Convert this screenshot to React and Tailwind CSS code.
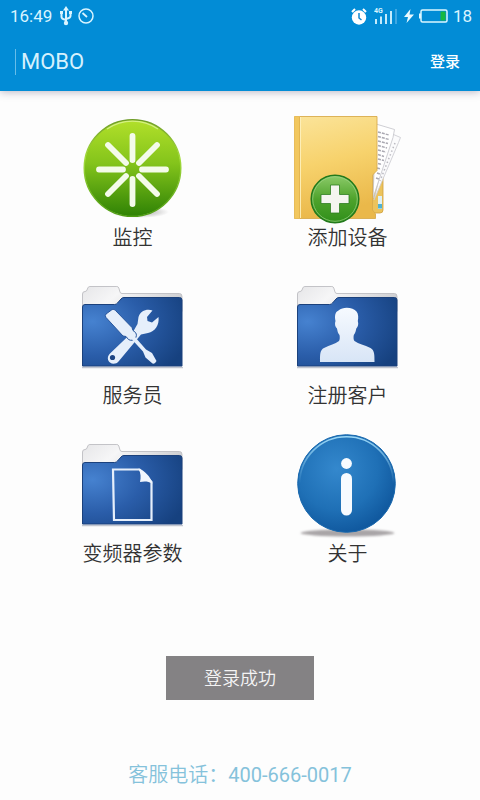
import { useState } from "react";

const MonitorIcon = () => (
    <svg viewBox="0 0 111 110" className="w-[111px] h-[110px]" aria-hidden="true">
        <defs>
            <linearGradient id="green" x1="0" y1="0" x2="0" y2="1">
                <stop offset="0" stopColor="#b2e02a" />
                <stop offset="0.45" stopColor="#84c41b" />
                <stop offset="1" stopColor="#2f8205" />
            </linearGradient>
            <linearGradient id="greenRim" x1="0" y1="0" x2="0" y2="1">
                <stop offset="0" stopColor="#6f9c28" />
                <stop offset="0.4" stopColor="#a4dc3c" />
                <stop offset="1" stopColor="#4f9c14" />
            </linearGradient>
            <radialGradient id="greenShadow">
                <stop offset="0.5" stopColor="#777" stopOpacity="0.35" />
                <stop offset="1" stopColor="#777" stopOpacity="0" />
            </radialGradient>
        </defs>
        <ellipse cx="62" cy="98" rx="30" ry="6" fill="url(#greenShadow)" />
        <circle cx="55.5" cy="54" r="48.3" fill="url(#green)" stroke="url(#greenRim)" strokeWidth="1.4" />
        <path d="M30 15a45 45 0 0 1 51 0" fill="none" stroke="#e4f6a8" strokeWidth="1.2" opacity="0.7" />
        <g stroke="#f4fbea" strokeWidth="5.8" strokeLinecap="round">
            <path d="M55.5 46V22M55.5 65v25M46 55.5H22M65 55.5h24" />
            <path d="M49 49 31 31M62 49 80 31M49 62 31 80M62 62 80 80" />
        </g>
    </svg>
);

const AddDeviceIcon = () => (
    <svg viewBox="0 0 111 110" className="w-[111px] h-[110px]" aria-hidden="true">
        <defs>
            <linearGradient id="yellow" x1="0" y1="0" x2="0.2" y2="1">
                <stop offset="0" stopColor="#fbe49a" />
                <stop offset="0.5" stopColor="#f7d26c" />
                <stop offset="1" stopColor="#eab84a" />
            </linearGradient>
            <linearGradient id="badge" x1="0" y1="0" x2="0" y2="1">
                <stop offset="0" stopColor="#8ccb6a" />
                <stop offset="0.5" stopColor="#4fa32c" />
                <stop offset="1" stopColor="#2f8f1a" />
            </linearGradient>
        </defs>
        <path d="M82 58h9v38q0 3-3 3h-8z" fill="#ecc35c" stroke="#cfa03c" strokeWidth="0.8" />
        <path d="M86 82h4v13h-4z" fill="#dff0f4" />
        <path d="M86 90h4v4.5h-4z" fill="#4fb2d2" />
        <path d="M98 19l10.500 4.500-2 5L82 86z" fill="#fbfbfc" stroke="#c9c9cf" strokeWidth="0.8" />
        <path d="M84 10l18.500 5.500-1.500 8L81 84z" fill="#fff" stroke="#c3c3c9" strokeWidth="0.8" />
        <g stroke="#aaa9b2" strokeWidth="1.5" strokeDasharray="3 1">
            <path d="M86 18l11 3M86 22.500l11 3M86 27l10 2.500M86 31.500l9 2.500M86 36l8 2M86 40.500l6 2M86 45l6 1.500M86 49.500l4 1M85 54l4 1M85 59l3 1M84 64l3 1" />
            <path d="M103 29L88 67" strokeDasharray="1.500 2.500" opacity="0.8" />
        </g>
        <path d="M2.500 2.500H85v54l-4.500 4.500v35l3 4v4.500h-81z" fill="url(#yellow)" stroke="#d9ac4c" strokeWidth="0.9" />
        <path d="M2.500 2.500H8v102H2.500z" fill="#f2c75e" />
        <path d="M8.500 3v101" stroke="#fdf0bd" strokeWidth="0.9" />
        <path d="M7.500 3v101" stroke="#dcae4c" strokeWidth="0.7" />
        <circle cx="43" cy="85" r="23.8" fill="url(#badge)" stroke="#237a1c" strokeWidth="1.5" />
        <circle cx="43" cy="85" r="22.3" fill="none" stroke="#9ed486" strokeWidth="1" opacity="0.7" />
        <path d="M38.500 71h9v9.500H57v9h-9.500V99h-9v-9.500H29v-9h9.500z" fill="#f4f5f0" stroke="#2f7d22" strokeWidth="0.8" />
    </svg>
);

//the three blue folders only differ in the drawing on the front
const Folder = ({ id, children }) => (
    <svg viewBox="0 0 111 110" className="w-[111px] h-[110px]" aria-hidden="true">
        <defs>
            <radialGradient id={id} cx="0.1" cy="0.35" r="1">
                <stop offset="0" stopColor="#4682d0" />
                <stop offset="0.5" stopColor="#2a5da9" />
                <stop offset="1" stopColor="#16417f" />
            </radialGradient>
            <linearGradient id={id + "Back"} x1="0" y1="0" x2="1" y2="0.3">
                <stop offset="0" stopColor="#e6e6e8" />
                <stop offset="0.4" stopColor="#f6f6f7" />
                <stop offset="1" stopColor="#cfd0d3" />
            </linearGradient>
        </defs>
        <path d="M5 95.500h101" stroke="#aab0bd" strokeWidth="1.5" opacity="0.7" />
        <path
            d="M5.500 40V22q0-2.500 2.500-2.500 1.500 0 2-1.500l.8-2q.5-1.500 2-1.500h27q1.500 0 2 1.500l1.200 4q.4 1.500 2 1.500h57.500q2.500 0 2.500 3v15z"
            fill={`url(#${id}Back)`}
            stroke="#bdbdc2"
            strokeWidth="0.9"
        />
        <path
            d="M5.500 94V35q0-2.500 2.500-2.500h29.500q2 0 3-1.500l3.500-4q1-1.500 3-1.500h55.500q2.500 0 2.500 2.500v66z"
            fill={`url(#${id})`}
            stroke="#1b417c"
            strokeWidth="1"
        />
        {children}
    </svg>
);

const ServiceIcon = () => (
    <Folder id="service">
        <g fill="#e6effb">
            <path d="M75.500 38.500c-6-2-12 .5-14 6.500l-1 7-4 7L32.500 82c-2.500 3-2 6.500.5 8.500s6.500 1.500 8.500-1L64 62.500l7-1.500c7-1.500 11.500-8 10.500-16L75 50.500l-4.500-1.500-.5-4z" />
            <circle cx="35.5" cy="85.5" r="2.6" fill="#1c4484" />
            <path
                d="M29 42l5.500-4c1.500-1 3-.5 4 .5L55 55.500l1 3 2.500 2c3 4-2 10-7 7l-2.500-3-3-.5L29 45.500q-1.500-2 0-3.500z"
                stroke="#28569d"
                strokeWidth="1"
            />
            <path d="M58 65l11 12.500 6 3.500 4.500 8c-1 2-2.500 3-4 2.500l-7-6-2.500-6L55 67.500z" />
        </g>
    </Folder>
);

const CustomerIcon = () => (
    <Folder id="customer">
        <defs>
            <linearGradient id="person" x1="0" y1="0" x2="0" y2="1">
                <stop offset="0" stopColor="#f6faff" />
                <stop offset="1" stopColor="#d8e5f6" />
            </linearGradient>
        </defs>
        <path
            d="M28 90c0-8 0-12 4-14 6-3 11-4 15-7 .8-1 1-4 .5-6-1.800-2-2-4-2.500-6.500-2-1.500-2.500-5-1.500-7.500-1-5-.5-9 3-10.500 5-4.500 15-3 18 1 2 2.500 2 6 1.300 9.500 1 3 .2 6-1.500 7.500-.5 2.500-1 4.500-2.500 6.500-.5 2-.3 5 .7 6 4 3 10 4 16 7 4 2.500 4 6 4 14z"
            fill="url(#person)"
        />
    </Folder>
);

const ParamsIcon = () => (
    <Folder id="params">
        <path d="M36 39.500h26.500L74.500 52v38H37z" fill="none" stroke="#e6effb" strokeWidth="2.2" />
        <path d="M61.500 38.500C64 43 64 48 63 52c4-1 8-1 12.500 1.500C74 47 67 40 61.500 38.500z" fill="#f1f6fd" />
    </Folder>
);

const AboutIcon = () => (
    <svg viewBox="0 0 111 110" className="w-[111px] h-[110px]" aria-hidden="true">
        <defs>
            <radialGradient id="info" cx="0.4" cy="0.35" r="0.7">
                <stop offset="0" stopColor="#3488cd" />
                <stop offset="0.6" stopColor="#1f70b6" />
                <stop offset="1" stopColor="#0e559b" />
            </radialGradient>
            <linearGradient id="shine" x1="0" y1="0" x2="0" y2="1">
                <stop offset="0" stopColor="#9bd8f7" />
                <stop offset="0.5" stopColor="#9bd8f7" stopOpacity="0" />
            </linearGradient>
            <filter id="soft" x="-10%" y="-50%" width="120%" height="200%">
                <feGaussianBlur stdDeviation="0.8" />
            </filter>
        </defs>
        <ellipse cx="55.5" cy="103" rx="47" ry="3.5" fill="#a9a5a7" filter="url(#soft)" />
        <circle cx="54.5" cy="53.5" r="48.8" fill="url(#info)" stroke="#1a69ae" strokeWidth="1" />
        <circle cx="54.5" cy="53.5" r="46.8" fill="none" stroke="url(#shine)" strokeWidth="1.6" />
        <circle cx="54.5" cy="33.5" r="5.4" fill="#f7fbff" />
        <path d="M54.500 48.500v31.500" stroke="#f7fbff" strokeWidth="11" strokeLinecap="round" />
    </svg>
);

const items = [
    { name: "监控", Icon: MonitorIcon },
    { name: "添加设备", Icon: AddDeviceIcon },
    { name: "服务员", Icon: ServiceIcon },
    { name: "注册客户", Icon: CustomerIcon },
    { name: "变频器参数", Icon: ParamsIcon },
    { name: "关于", Icon: AboutIcon },
];

const StatusBar = () => (
    <div className="h-8 pl-[10px] pr-2 flex items-center justify-between text-[17px] leading-5 text-[#d9f4ff]">
        <div className="flex items-center">
            <span>16:49</span>
            <svg viewBox="0 0 14 20" className="w-[14px] h-5 ml-[7px]" fill="none" stroke="currentColor" strokeWidth="2">
                <path d="M7 3v14M2.500 7v4q0 2 4.500 3M11.500 7v3q0 2-4.500 3" />
                <path d="M7 0l3 4.500H4z" fill="currentColor" stroke="none" />
                <circle cx="7" cy="17" r="2.2" fill="currentColor" stroke="none" />
                <path d="M1 5h3v3H1zM10 5h3v3h-3z" fill="currentColor" stroke="none" />
            </svg>
            <svg viewBox="0 0 16 16" className="w-4 h-4 ml-[5px]" fill="none" stroke="currentColor" strokeWidth="1.5">
                <circle cx="8" cy="8" r="7" />
                <path d="M4.500 5L9 9" strokeWidth="1.8" />
            </svg>
        </div>
        <div className="flex items-center">
            <svg viewBox="0 0 16 17" className="w-4 h-[17px]" fill="none">
                <circle cx="8" cy="9.5" r="7.2" fill="#fff" />
                <path d="M1 4l3-3M15 4l-3-3" stroke="#fff" strokeWidth="2" />
                <path d="M8 5v5l2.500 2" stroke="#1287cf" strokeWidth="1.5" />
            </svg>
            <svg viewBox="0 0 24 18" className="w-6 h-[18px] ml-[7px]" aria-label="4G">
                <text x="0" y="6" fontSize="7" fontWeight="700" fill="currentColor">
                    4G
                </text>
                <path d="M2 17v-5M7 17V9.500M12 17V7M17 17V4" stroke="currentColor" strokeWidth="1.8" />
                <path d="M22 17V2" stroke="#55b2e6" strokeWidth="1.5" />
            </svg>
            <svg viewBox="0 0 10 14" className="w-[10px] h-[14px] ml-1.5" fill="#e8f9ff">
                <path d="M6.500 0L0 8h4l-1.500 6L10 5.500H5.500z" />
            </svg>
            <svg viewBox="0 0 29 14" className="w-[29px] h-[14px] ml-[5px]">
                <path d="M0 4.500h2v5H0z" fill="#dcf6ff" />
                <rect x="2" y="1" width="26" height="12" rx="1.5" fill="none" stroke="#dcf6ff" strokeWidth="1.5" />
                <path d="M21.500 2.500h5v9h-5z" fill="#16b840" />
            </svg>
            <span className="ml-[5px]">18</span>
        </div>
    </div>
);

const App = () => {
    const [toast] = useState("登录成功");

    return (
        <div className="relative min-h-screen flex flex-col bg-[#fdfdfd] font-[Roboto,'Noto_Sans_CJK_SC',sans-serif]">
            <header className="bg-[#028cd6] shadow-[0_1px_8px_rgba(60,50,90,0.35)]">
                <StatusBar />
                <div className="h-[59px] pl-[15px] pr-5 flex items-center justify-between">
                    <h1 className="border-l border-[#67bde9] pl-[5px] text-[22px] leading-[26px] font-normal text-[#d6f1fd]">
                        MOBO
                    </h1>
                    <button className="text-[15px] leading-5 font-medium text-white">登录</button>
                </div>
            </header>
            <main className="px-[25px] pt-[23px] grid grid-cols-2 gap-y-5">
                {items.map(({ name, Icon }) => (
                    <button key={name} className="flex flex-col items-center">
                        <Icon />
                        <span className="text-[20px] leading-7 font-[350] text-[#333]">{name}</span>
                    </button>
                ))}
            </main>
            {toast && (
                <div
                    role="status"
                    className="absolute bottom-[100px] left-1/2 -translate-x-1/2 w-[148px] h-11 flex items-center justify-center bg-[#848284] text-[18px] font-[350] text-[#f4f4f4]"
                >
                    {toast}
                </div>
            )}
            <footer className="mt-auto pb-3 text-center text-[20px] leading-[26px] font-[350] text-[#85c2db]">
                客服电话：
                <a href="tel:400-666-0017" className="font-normal">
                    400-666-0017
                </a>
            </footer>
        </div>
    );
};

export default App;
